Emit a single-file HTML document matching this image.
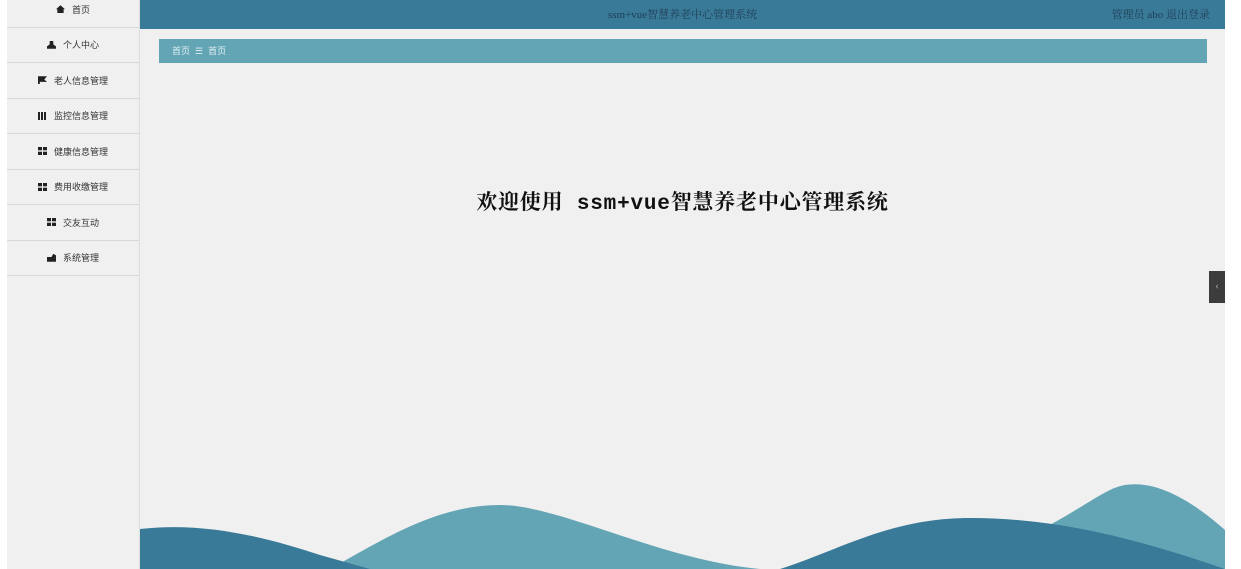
<!DOCTYPE html>
<html><head><meta charset="utf-8"><style>
*{margin:0;padding:0;box-sizing:border-box}
body{width:1241px;height:569px;overflow:hidden;background:#fff;font-family:"Liberation Serif","Noto Serif CJK SC",serif;position:relative}
.side{position:absolute;left:7px;top:-8px;width:133px;height:577px;background:#f0f0f0;border-right:1px solid #ddd}
.item{height:35.5px;border-bottom:1px solid #d8d8d8;display:flex;align-items:center;justify-content:center;font-family:"Liberation Sans","Noto Sans CJK SC",sans-serif;font-size:9px;color:#333}
.ic{display:inline-block;width:9px;height:8px;margin-right:7px;background:#222}
svg.ic{background:none}
.main{position:absolute;left:140px;top:0;width:1085px;height:569px;background:#f0f0f0;overflow:hidden}
.hdr{position:absolute;left:0;top:0;width:1085px;height:29px;background:#3a7a99;color:#1e3e55;font-size:11px}
.bc{position:absolute;left:19px;top:39px;width:1048px;height:24px;background:#64a5b5;color:#dfeff3;font-family:"Liberation Sans","Noto Sans CJK SC",sans-serif;font-size:9px;line-height:24px;padding-left:13px}
h1{position:absolute;left:0;width:1085px;top:186px;text-align:center;font-family:"Liberation Mono","Noto Serif CJK SC",serif;font-size:21px;font-weight:bold;color:#111;letter-spacing:0.8px}
.tab{position:absolute;left:1209px;top:271px;width:16px;height:32px;background:#3c3c3c;color:#bbb;font-size:10px;text-align:center;line-height:32px}
</style></head><body>
<div class="side">
<div class="item"><span class="ic" style="clip-path:polygon(50% 0,100% 50%,85% 50%,85% 100%,15% 100%,15% 50%,0 50%)"></span>首页</div>
<div class="item"><span class="ic" style="clip-path:polygon(30% 0,70% 0,70% 45%,100% 70%,100% 100%,0 100%,0 70%,30% 45%)"></span>个人中心</div>
<div class="item"><span class="ic" style="clip-path:polygon(0 0,100% 0,70% 40%,100% 70%,20% 70%,20% 100%,0 100%)"></span>老人信息管理</div>
<div class="item"><span class="ic" style="background:repeating-linear-gradient(90deg,#222 0 2px,transparent 2px 3px)"></span>监控信息管理</div>
<div class="item"><svg class="ic" viewBox="0 0 9 8"><rect x="0" y="0" width="4" height="3.3" fill="#222"/><rect x="5" y="0" width="4" height="3.3" fill="#222"/><rect x="0" y="4.7" width="4" height="3.3" fill="#222"/><rect x="5" y="4.7" width="4" height="3.3" fill="#222"/></svg>健康信息管理</div>
<div class="item"><svg class="ic" viewBox="0 0 9 8"><rect x="0" y="0" width="4" height="3.3" fill="#222"/><rect x="5" y="0" width="4" height="3.3" fill="#222"/><rect x="0" y="4.7" width="4" height="3.3" fill="#222"/><rect x="5" y="4.7" width="4" height="3.3" fill="#222"/></svg>费用收缴管理</div>
<div class="item"><svg class="ic" viewBox="0 0 9 8"><rect x="0" y="0" width="4" height="3.3" fill="#222"/><rect x="5" y="0" width="4" height="3.3" fill="#222"/><rect x="0" y="4.7" width="4" height="3.3" fill="#222"/><rect x="5" y="4.7" width="4" height="3.3" fill="#222"/></svg>交友互动</div>
<div class="item"><span class="ic" style="clip-path:polygon(0 40%,50% 40%,70% 0,100% 20%,100% 100%,0 100%)"></span>系统管理</div>
</div>
<div class="main">
<div class="hdr"><div style="position:absolute;left:0;width:1085px;text-align:center;top:6px">ssm+vue智慧养老中心管理系统</div><div style="position:absolute;right:15px;top:6px">管理员 abo 退出登录</div></div>
<div class="bc">首页 &nbsp;☰ &nbsp;首页</div>
<h1>欢迎使用 ssm+vue智慧养老中心管理系统</h1>
<svg style="position:absolute;left:0;top:460px" width="1085" height="109" viewBox="0 0 1085 109">
<path d="M1085 70 C1040 30 1000 15 970 30 C950 40 930 55 900 70 L1085 109 Z" fill="#64a5b5"/>
<path d="M190 109 C250 75 300 45 360 45 C420 45 520 100 620 109 Z" fill="#64a5b5"/>
<path d="M0 69 C60 62 120 75 180 95 L230 109 L0 109 Z" fill="#3a7a99"/>
<path d="M640 109 C700 90 750 58 830 58 C920 58 1000 80 1085 109 Z" fill="#3a7a99"/>
</svg>
</div>
<div class="tab">‹</div>
</body></html>
